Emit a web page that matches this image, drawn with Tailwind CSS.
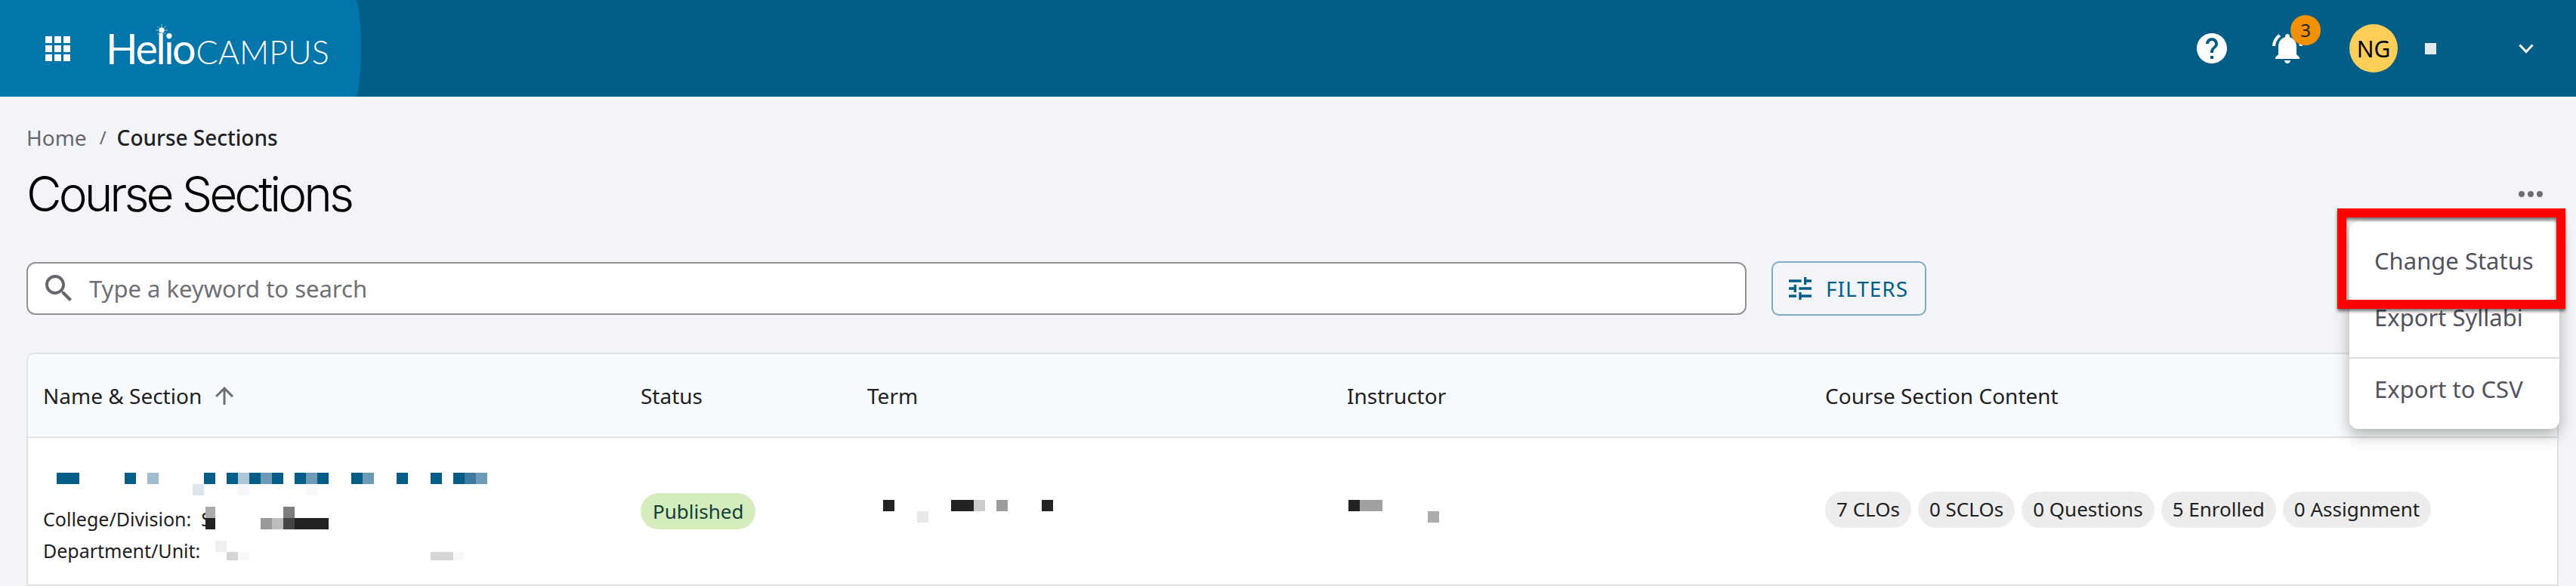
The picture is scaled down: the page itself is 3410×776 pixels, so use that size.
<!DOCTYPE html>
<html lang="en">
<head>
  <meta charset="UTF-8" />
  <title>Course Sections</title>
  <script src="https://cdn.jsdelivr.net/npm/@tailwindcss/browser@4"></script>
</head>
<body class="bg-[#f2f4f8] font-['Noto_Sans',sans-serif] text-[#212121] overflow-hidden">
<div class="relative w-[3410px] h-[776px] overflow-hidden">

  <!-- top bar -->
  <header class="h-[128px] bg-[#025e87] flex items-center justify-between">
    <div class="h-full w-[478px] bg-[#0275aa] rounded-r-[8px_64px] flex items-center pl-[60px]">
      <div class="grid grid-cols-3 gap-[3px]">
        <i class="block size-[9px] bg-white"></i><i class="block size-[9px] bg-white"></i><i class="block size-[9px] bg-white"></i>
        <i class="block size-[9px] bg-white"></i><i class="block size-[9px] bg-white"></i><i class="block size-[9px] bg-white"></i>
        <i class="block size-[9px] bg-white"></i><i class="block size-[9px] bg-white"></i><i class="block size-[9px] bg-white"></i>
      </div>
      <div class="relative ml-[47px] flex items-baseline text-white font-['Lato',sans-serif] leading-none">
        <span class="text-[56px] font-normal tracking-[-2.5px]">Helio</span>
        <span class="text-[43px] font-light tracking-[0.2px] ml-[2px]">CAMPUS</span>
        <svg class="absolute left-[66px] top-[-4px]" width="16" height="16" viewBox="0 0 16 16"><circle cx="8" cy="8" r="3.5" fill="#fff"/><path d="M8 0v16M0 8h16M2.5 2.5l11 11M13.5 2.5l-11 11" stroke="#fff" stroke-opacity=".55" stroke-width="1"/></svg>
      </div>
    </div>
    <div class="flex items-center pr-[56px]">
      <svg class="size-[48px] fill-white" viewBox="0 0 24 24"><path d="M12 2C6.48 2 2 6.48 2 12s4.48 10 10 10 10-4.48 10-10S17.52 2 12 2zm1 17h-2v-2h2v2zm2.07-7.75l-.9.92C13.45 12.9 13 13.5 13 15h-2v-.5c0-1.1.45-2.1 1.17-2.83l1.24-1.26c.37-.36.59-.86.59-1.41 0-1.1-.9-2-2-2s-2 .9-2 2H8c0-2.21 1.79-4 4-4s4 1.79 4 4c0 .88-.36 1.68-.93 2.25z"/></svg>
      <div class="relative ml-[52px]">
        <svg class="size-[48px] fill-white" viewBox="0 0 24 24"><path d="M7.58 4.08L6.15 2.65C3.75 4.48 2.17 7.3 2.03 10.5h2c.15-2.65 1.51-4.97 3.55-6.42zm12.39 6.42h2c-.15-3.2-1.73-6.02-4.12-7.85l-1.42 1.43c2.02 1.45 3.39 3.77 3.54 6.42zM18 11c0-3.07-1.64-5.64-4.5-6.32V4c0-.83-.67-1.5-1.5-1.5s-1.5.67-1.5 1.5v.68C7.63 5.36 6 7.92 6 11v5l-2 2v1h16v-1l-2-2v-5zm-6 11c.14 0 .27-.01.4-.04.65-.14 1.18-.58 1.44-1.18.1-.24.15-.5.15-.78h-4c.01 1.1.9 2 2.01 2z"/></svg>
        <span class="absolute left-[28px] top-[-20px] size-[40px] rounded-full bg-[#f29100] flex items-center justify-center text-[24px] text-[#212121]">3</span>
      </div>
      <div class="ml-[58px] size-[64px] rounded-full bg-[#fdcf58] flex items-center justify-center text-[30px] text-black">NG</div>
      <i class="block ml-[36px] size-[15px] bg-[#e3ebf1]"></i>
      <svg class="ml-[109px] w-[20px] h-[13px]" viewBox="0 0 20 13"><path d="M1.5 1.5 10 10.5l8.5-9" fill="none" stroke="#fff" stroke-width="3"/></svg>
    </div>
  </header>

  <main class="pl-[35px] pr-[23px]">
    <nav class="mt-[34px] h-[40px] flex items-center text-[28px] leading-none">
      <span class="text-[#66666e]">Home</span>
      <span class="ml-[17px] text-[#66666e] text-[24px]">/</span>
      <span class="ml-[14px] font-medium text-[#212121]">Course Sections</span>
    </nav>
    <div class="mt-[20px] h-[70px] flex items-center justify-between">
      <h1 class="font-['Inter',sans-serif] font-light text-[64px] tracking-[-3.95px] text-black leading-none">Course Sections</h1>
      <div class="flex gap-[4px] mr-[21px]">
        <i class="block size-[8px] rounded-full bg-[#6e6e76]"></i><i class="block size-[8px] rounded-full bg-[#6e6e76]"></i><i class="block size-[8px] rounded-full bg-[#6e6e76]"></i>
      </div>
    </div>

    <!-- search -->
    <div class="mt-[54px] h-[72px] flex items-center">
      <div class="w-[2277px] h-[70px] bg-white border-2 border-[#929292] rounded-[12px] flex items-center pl-[17px] text-[#6f6f76] text-[31px]">
        <svg class="size-[48px] fill-[#66666e]" viewBox="0 0 24 24"><path d="M15.5 14h-.79l-.28-.27C15.41 12.59 16 11.11 16 9.5 16 5.91 13.09 3 9.5 3S3 5.91 3 9.5 5.91 16 9.5 16c1.61 0 3.09-.59 4.23-1.57l.27.28v.79l5 4.99L20.49 19l-4.99-5zm-6 0C7.01 14 5 11.99 5 9.5S7.01 5 9.5 5 14 7.01 14 9.5 11.99 14 9.5 14z"/></svg>
        <span class="ml-[16px]">Type a keyword to search</span>
      </div>
      <button class="ml-[33px] w-[205px] h-[72px] border-2 border-[#80a8c0] rounded-[10px] flex items-center pl-[16px] text-[#025e87] text-[28px] tracking-[1px]">
        <svg class="size-[40px] fill-[#025e87]" viewBox="0 0 24 24"><path d="M3 17v2h6v-2H3zM3 5v2h10V5H3zm10 16v-2h8v-2h-8v-2h-2v6h2zM7 9v2H3v2h4v2h2V9H7zm14 4v-2H11v2h10zm-6-4h2V7h4V5h-4V3h-2v6z"/></svg>
        <span class="ml-[14px]">FILTERS</span>
      </button>
    </div>

    <!-- table -->
    <section class="mt-[49px] bg-white border-2 border-[#e2e2e4] rounded-t-[10px] text-[28px]">
      <div class="h-[111px] bg-[#f8fbfd] rounded-t-[8px] border-b-2 border-[#e2e0e3] pl-[20px] grid grid-cols-[791px_300px_635px_633px_1fr] items-center">
        <div class="flex items-center">Name &amp; Section
          <svg class="ml-[12px] size-[36px] fill-[#6f6f6f]" viewBox="0 0 24 24"><path d="M4 12l1.41 1.41L11 7.83V20h2V7.83l5.58 5.59L20 12l-8-8-8 8z"/></svg>
        </div>
        <div>Status</div>
        <div>Term</div>
        <div>Instructor</div>
        <div>Course Section Content</div>
      </div>
      <div class="h-[196px] pl-[20px] grid grid-cols-[791px_300px_635px_633px_1fr] items-center border-b-2 border-[#e2e0e3] text-[25px]">
        <div class="relative h-full">
          <div class="absolute left-0 top-[86px] leading-[42px]">
            <div>College/Division:&nbsp; S</div>
            <div>Department/Unit:</div>
          </div>
          <!-- blurred name and department -->
          <svg class="absolute left-[-57px] top-0" width="800" height="196" viewBox="0 580 800 196">
            <g fill="#025e87">
              <rect x="75" y="626" width="30" height="15"/><rect x="165" y="626" width="15" height="15"/>
              <rect x="270" y="626" width="15" height="15"/><rect x="300" y="626" width="15" height="15"/><rect x="330" y="626" width="15" height="15"/><rect x="360" y="626" width="15" height="15"/>
              <rect x="390" y="626" width="15" height="15"/><rect x="420" y="626" width="15" height="15"/><rect x="465" y="626" width="15" height="15"/>
              <rect x="525" y="626" width="15" height="15"/><rect x="570" y="626" width="15" height="15"/><rect x="600" y="626" width="15" height="15"/>
            </g>
            <g fill="#6d9ab5">
              <rect x="345" y="626" width="15" height="15"/><rect x="405" y="626" width="15" height="15"/><rect x="480" y="626" width="15" height="15"/>
              <rect x="615" y="626" width="15" height="15" fill="#3f7a9e"/><rect x="630" y="626" width="15" height="15"/>
            </g>
            <rect x="195" y="626" width="15" height="15" fill="#a0bccf"/><rect x="315" y="626" width="15" height="15" fill="#adc6d6"/>
            <rect x="255" y="641" width="15" height="15" fill="#dde6ed"/><rect x="315" y="641" width="15" height="15" fill="#f5f7fa"/><rect x="405" y="641" width="15" height="15" fill="#f7f9fa"/>
            <rect x="272" y="671" width="13" height="15" fill="#aaaaaa"/><rect x="272" y="686" width="13" height="15" fill="#222222"/>
            <rect x="375" y="671" width="15" height="15" fill="#7d7d7d"/>
            <rect x="345" y="686" width="15" height="15" fill="#999999"/><rect x="360" y="686" width="15" height="15" fill="#bdbdbd"/><rect x="375" y="686" width="15" height="15" fill="#454545"/>
            <rect x="390" y="686" width="45" height="15" fill="#222222"/>
            <rect x="285" y="716" width="15" height="15" fill="#f0f0f0"/><rect x="300" y="731" width="15" height="11" fill="#d4d4d4"/><rect x="315" y="731" width="15" height="11" fill="#f8f8f8"/>
            <rect x="570" y="731" width="30" height="11" fill="#d6d6d6"/><rect x="600" y="731" width="15" height="11" fill="#f8f8f8"/>
          </svg>
        </div>
        <div><span class="inline-flex items-center h-[48px] px-[16px] rounded-full bg-[#d5edbd] text-[#14403a] text-[26px]">Published</span></div>
        <svg class="ml-[21px]" width="240" height="30" viewBox="0 0 240 30">
          <rect x="0" y="0" width="15" height="15" fill="#222222"/><rect x="90" y="0" width="30" height="15" fill="#222222"/><rect x="120" y="0" width="15" height="15" fill="#cccccc"/>
          <rect x="150" y="0" width="15" height="15" fill="#9c9c9c"/><rect x="210" y="0" width="15" height="15" fill="#222222"/><rect x="45" y="15" width="15" height="15" fill="#e8e8e8"/>
        </svg>
        <svg class="ml-[2px]" width="135" height="30" viewBox="0 0 135 30">
          <rect x="0" y="0" width="15" height="15" fill="#222222"/><rect x="15" y="0" width="30" height="15" fill="#a0a0a0"/><rect x="105" y="15" width="15" height="15" fill="#adadad"/>
        </svg>
        <div class="flex gap-[9px] text-[26px] mb-[5px]">
          <span class="inline-flex items-center h-[48px] px-[15px] rounded-full bg-[#ededed]">7 CLOs</span>
          <span class="inline-flex items-center h-[48px] px-[15px] rounded-full bg-[#ededed]">0 SCLOs</span>
          <span class="inline-flex items-center h-[48px] px-[15px] rounded-full bg-[#ededed]">0 Questions</span>
          <span class="inline-flex items-center h-[48px] px-[15px] rounded-full bg-[#ededed]">5 Enrolled</span>
          <span class="inline-flex items-center h-[48px] px-[15px] rounded-full bg-[#ededed]">0 Assignment</span>
        </div>
      </div>
    </section>
  </main>

  <!-- actions menu, opened over the table -->
  <div class="absolute left-[3110px] top-[293px] w-[278px] h-[275px] bg-white rounded-[12px] shadow-[0_8px_20px_rgba(0,0,0,0.3)] text-[#53535d] text-[31px] flex flex-col">
    <div class="h-[104px] pl-[33px] flex items-center">Change Status</div>
    <div class="h-[78px] pl-[33px] flex items-start border-b-2 border-[#dcdcdf]">Export Syllabi</div>
    <div class="flex-1 pl-[33px] pb-[13px] flex items-center">Export to CSV</div>
  </div>
  <!-- red callout -->
  <div class="absolute left-[3094px] top-[276px] w-[302px] h-[133px] border-[12px] border-[#ff0000] shadow-[0_3px_4px_rgba(0,0,0,0.55),inset_0_3px_4px_rgba(0,0,0,0.55)]"></div>
</div>
</body>
</html>
